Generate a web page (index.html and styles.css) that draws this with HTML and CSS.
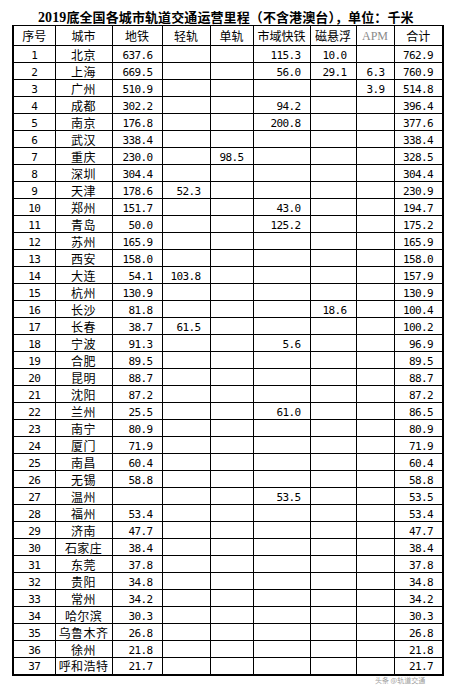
FILE: index.html
```html
<!DOCTYPE html>
<html lang="zh">
<head>
<meta charset="utf-8">
<title>2019底全国各城市轨道交通运营里程</title>
<link rel="stylesheet" href="styles.css">
</head>
<body>
<div class="page">
  <h1 class="title"><span class="yr">2019</span>底全国各城市轨道交通运营里程（不含港澳台），单位：千米</h1>
  <table class="grid">
    <colgroup>
      <col class="c-no"><col class="c-city"><col class="c-sub"><col class="c-lr"><col class="c-mono"><col class="c-reg"><col class="c-mag"><col class="c-apm"><col class="c-sum">
    </colgroup>
    <thead>
      <tr><th>序号</th><th>城市</th><th>地铁</th><th>轻轨</th><th>单轨</th><th>市域快铁</th><th>磁悬浮</th><th class="apm">APM</th><th>合计</th></tr>
    </thead>
    <tbody>
      <tr><td class="no">1</td><td class="city">北京</td><td>637.6</td><td></td><td></td><td>115.3</td><td>10.0</td><td></td><td>762.9</td></tr>
      <tr><td class="no">2</td><td class="city">上海</td><td>669.5</td><td></td><td></td><td>56.0</td><td>29.1</td><td>6.3</td><td>760.9</td></tr>
      <tr><td class="no">3</td><td class="city">广州</td><td>510.9</td><td></td><td></td><td></td><td></td><td>3.9</td><td>514.8</td></tr>
      <tr><td class="no">4</td><td class="city">成都</td><td>302.2</td><td></td><td></td><td>94.2</td><td></td><td></td><td>396.4</td></tr>
      <tr><td class="no">5</td><td class="city">南京</td><td>176.8</td><td></td><td></td><td>200.8</td><td></td><td></td><td>377.6</td></tr>
      <tr><td class="no">6</td><td class="city">武汉</td><td>338.4</td><td></td><td></td><td></td><td></td><td></td><td>338.4</td></tr>
      <tr><td class="no">7</td><td class="city">重庆</td><td>230.0</td><td></td><td>98.5</td><td></td><td></td><td></td><td>328.5</td></tr>
      <tr><td class="no">8</td><td class="city">深圳</td><td>304.4</td><td></td><td></td><td></td><td></td><td></td><td>304.4</td></tr>
      <tr><td class="no">9</td><td class="city">天津</td><td>178.6</td><td>52.3</td><td></td><td></td><td></td><td></td><td>230.9</td></tr>
      <tr><td class="no">10</td><td class="city">郑州</td><td>151.7</td><td></td><td></td><td>43.0</td><td></td><td></td><td>194.7</td></tr>
      <tr><td class="no">11</td><td class="city">青岛</td><td>50.0</td><td></td><td></td><td>125.2</td><td></td><td></td><td>175.2</td></tr>
      <tr><td class="no">12</td><td class="city">苏州</td><td>165.9</td><td></td><td></td><td></td><td></td><td></td><td>165.9</td></tr>
      <tr><td class="no">13</td><td class="city">西安</td><td>158.0</td><td></td><td></td><td></td><td></td><td></td><td>158.0</td></tr>
      <tr><td class="no">14</td><td class="city">大连</td><td>54.1</td><td>103.8</td><td></td><td></td><td></td><td></td><td>157.9</td></tr>
      <tr><td class="no">15</td><td class="city">杭州</td><td>130.9</td><td></td><td></td><td></td><td></td><td></td><td>130.9</td></tr>
      <tr><td class="no">16</td><td class="city">长沙</td><td>81.8</td><td></td><td></td><td></td><td>18.6</td><td></td><td>100.4</td></tr>
      <tr><td class="no">17</td><td class="city">长春</td><td>38.7</td><td>61.5</td><td></td><td></td><td></td><td></td><td>100.2</td></tr>
      <tr><td class="no">18</td><td class="city">宁波</td><td>91.3</td><td></td><td></td><td>5.6</td><td></td><td></td><td>96.9</td></tr>
      <tr><td class="no">19</td><td class="city">合肥</td><td>89.5</td><td></td><td></td><td></td><td></td><td></td><td>89.5</td></tr>
      <tr><td class="no">20</td><td class="city">昆明</td><td>88.7</td><td></td><td></td><td></td><td></td><td></td><td>88.7</td></tr>
      <tr><td class="no">21</td><td class="city">沈阳</td><td>87.2</td><td></td><td></td><td></td><td></td><td></td><td>87.2</td></tr>
      <tr><td class="no">22</td><td class="city">兰州</td><td>25.5</td><td></td><td></td><td>61.0</td><td></td><td></td><td>86.5</td></tr>
      <tr><td class="no">23</td><td class="city">南宁</td><td>80.9</td><td></td><td></td><td></td><td></td><td></td><td>80.9</td></tr>
      <tr><td class="no">24</td><td class="city">厦门</td><td>71.9</td><td></td><td></td><td></td><td></td><td></td><td>71.9</td></tr>
      <tr><td class="no">25</td><td class="city">南昌</td><td>60.4</td><td></td><td></td><td></td><td></td><td></td><td>60.4</td></tr>
      <tr><td class="no">26</td><td class="city">无锡</td><td>58.8</td><td></td><td></td><td></td><td></td><td></td><td>58.8</td></tr>
      <tr><td class="no">27</td><td class="city">温州</td><td></td><td></td><td></td><td>53.5</td><td></td><td></td><td>53.5</td></tr>
      <tr><td class="no">28</td><td class="city">福州</td><td>53.4</td><td></td><td></td><td></td><td></td><td></td><td>53.4</td></tr>
      <tr><td class="no">29</td><td class="city">济南</td><td>47.7</td><td></td><td></td><td></td><td></td><td></td><td>47.7</td></tr>
      <tr><td class="no">30</td><td class="city">石家庄</td><td>38.4</td><td></td><td></td><td></td><td></td><td></td><td>38.4</td></tr>
      <tr><td class="no">31</td><td class="city">东莞</td><td>37.8</td><td></td><td></td><td></td><td></td><td></td><td>37.8</td></tr>
      <tr><td class="no">32</td><td class="city">贵阳</td><td>34.8</td><td></td><td></td><td></td><td></td><td></td><td>34.8</td></tr>
      <tr><td class="no">33</td><td class="city">常州</td><td>34.2</td><td></td><td></td><td></td><td></td><td></td><td>34.2</td></tr>
      <tr><td class="no">34</td><td class="city">哈尔滨</td><td>30.3</td><td></td><td></td><td></td><td></td><td></td><td>30.3</td></tr>
      <tr><td class="no">35</td><td class="city">乌鲁木齐</td><td>26.8</td><td></td><td></td><td></td><td></td><td></td><td>26.8</td></tr>
      <tr><td class="no">36</td><td class="city">徐州</td><td>21.8</td><td></td><td></td><td></td><td></td><td></td><td>21.8</td></tr>
      <tr><td class="no">37</td><td class="city">呼和浩特</td><td>21.7</td><td></td><td></td><td></td><td></td><td></td><td>21.7</td></tr>
    </tbody>
  </table>
  <span class="mark">头条 @轨道交通</span>
</div>
</body>
</html>
```
FILE: styles.css
```css
html, body {
  margin: 0;
  padding: 0;
  background: #fff;
}
.page {
  position: relative;
  width: 454px;
  height: 686px;
  overflow: hidden;
  padding: 10px 0 0 12px;
  box-sizing: border-box;
  color: #000;
  font-family: "Noto Sans CJK SC", sans-serif;
}
.title {
  margin: 0 0 0 26px;
  height: 15px;
  font-size: 13px;
  line-height: 13px;
  font-weight: bold;
  letter-spacing: 0.1px;
  white-space: nowrap;
}
.title .yr {
  font-family: "Liberation Serif", serif;
  font-size: 14px;
}
.grid {
  border-collapse: collapse;
  table-layout: fixed;
  width: 430px;
  border: 2px solid #000;
  border-top-width: 1px;
}
.c-no { width: 42px; }
.c-city { width: 57px; }
.c-sub { width: 50px; }
.c-lr { width: 48px; }
.c-mono { width: 43px; }
.c-reg { width: 57px; }
.c-mag { width: 46px; }
.c-apm { width: 38px; }
.c-sum { width: 49px; }
.grid tr {
  height: 17px;
}
.grid thead tr {
  height: 20px;
}
.grid th, .grid td {
  border: 1px solid #000;
  padding: 0;
  white-space: nowrap;
  box-sizing: border-box;
}
.grid th {
  height: 20px;
  font-weight: normal;
  font-size: 12px;
  line-height: 14px;
  text-align: center;
  vertical-align: middle;
}
.grid th.apm {
  font-family: "Liberation Serif", serif;
  color: #8a8a8a;
  font-size: 12px;
}
.grid td {
  height: 17px;
  font-family: "DejaVu Sans Mono", monospace;
  font-size: 11px;
  line-height: 12px;
  letter-spacing: -0.6px;
  text-align: right;
  padding: 3px 9px 0 0;
  vertical-align: middle;
}
.grid td.no {
  text-align: center;
  padding-right: 0;
}
.grid td.city {
  text-align: center;
  padding: 1px 0 0 0;
  font-family: "Noto Sans CJK SC", sans-serif;
  font-size: 12px;
  line-height: 14px;
  letter-spacing: 0.4px;
}
.mark {
  position: absolute;
  left: 375px;
  top: 676px;
  font-size: 7px;
  line-height: 8px;
  color: #a0a0a0;
  white-space: nowrap;
}
```
